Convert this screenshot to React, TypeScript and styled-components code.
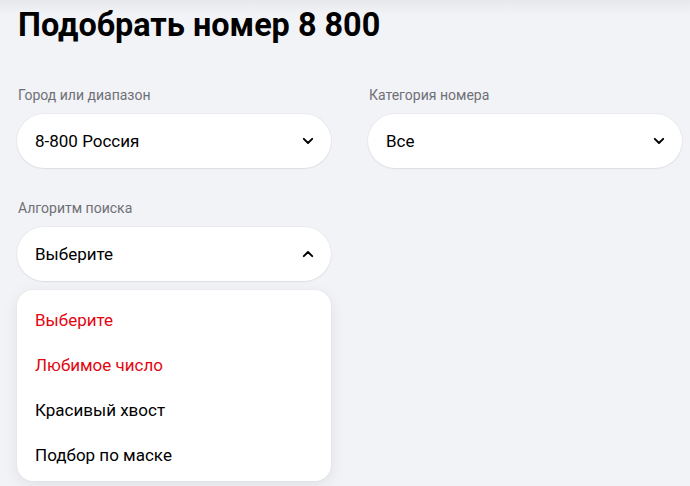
import React from "react";
import styled, { createGlobalStyle } from "styled-components";

const Global = createGlobalStyle`
  html, body { margin: 0; padding: 0; }
  body {
    background: #f2f3f7;
    font-family: Roboto, "Liberation Sans", sans-serif;
    color: #000;
    -webkit-font-smoothing: antialiased;
  }
`;

const Page = styled.div`
  width: 690px;
  height: 486px;
  overflow: hidden;
  box-sizing: border-box;
  padding: 6px 8px 0 17px;
  background: linear-gradient(180deg, #e7e8ec 0px, #f2f3f7 14px);
`;

const Title = styled.h1`
  margin: 0 0 0 1px;
  font-size: 32.4px;
  line-height: 38px;
  font-weight: 700;
  letter-spacing: 0;
`;

const Grid = styled.div`
  display: grid;
  grid-template-columns: 314px 314px;
  column-gap: 37px;
  row-gap: 30px;
  margin-top: 41px;
`;

const Field = styled.div`
  position: relative;
  display: flex;
  flex-direction: column;
  gap: 9px;
`;

const Label = styled.div`
  padding-left: 1px;
  font-size: 14px;
  line-height: 20px;
  color: #6e7076;
`;

const Select = styled.div`
  height: 54px;
  box-sizing: border-box;
  border-radius: 27px;
  background: #fff;
  box-shadow: 0 1px 2px rgba(0, 0, 0, 0.06), 0 0 0 1px rgba(0, 0, 0, 0.03);
  display: flex;
  align-items: center;
  justify-content: space-between;
  padding: 0 17px 0 18px;
  font-size: 17px;
`;

const Chevron = ({ up }: { up?: boolean }) => (
  <svg width="12" height="8" viewBox="0 0 12 8" fill="none">
    <path
      d={up ? "M1.8 6.2 L6 2 L10.2 6.2" : "M1.8 1.8 L6 6 L10.2 1.8"}
      stroke="#000"
      strokeWidth="1.9"
      strokeLinecap="round"
      strokeLinejoin="round"
    />
  </svg>
);

const Menu = styled.div`
  position: absolute;
  top: 92px;
  left: 0;
  width: 314px;
  box-sizing: border-box;
  background: #fff;
  border-radius: 16px;
  box-shadow: 0 4px 16px rgba(0, 0, 0, 0.08), 0 0 2px rgba(0, 0, 0, 0.06);
  padding: 7px 0 4px;
  z-index: 2;
`;

const Item = styled.div<{ $active?: boolean }>`
  height: 45px;
  display: flex;
  align-items: center;
  padding-left: 18px;
  font-size: 17px;
  color: ${(p) => (p.$active ? "#e30611" : "#000")};
`;

export default function App() {
  return (
    <>
      <Global />
      <Page>
        <Title>Подобрать номер 8 800</Title>
        <Grid>
          <Field>
            <Label>Город или диапазон</Label>
            <Select>
              8-800 Россия
              <Chevron />
            </Select>
          </Field>
          <Field>
            <Label>Категория номера</Label>
            <Select>
              Все
              <Chevron />
            </Select>
          </Field>
          <Field>
            <Label>Алгоритм поиска</Label>
            <Select>
              Выберите
              <Chevron up />
            </Select>
            <Menu>
              <Item $active>Выберите</Item>
              <Item $active>Любимое число</Item>
              <Item>Красивый хвост</Item>
              <Item>Подбор по маске</Item>
            </Menu>
          </Field>
        </Grid>
      </Page>
    </>
  );
}
